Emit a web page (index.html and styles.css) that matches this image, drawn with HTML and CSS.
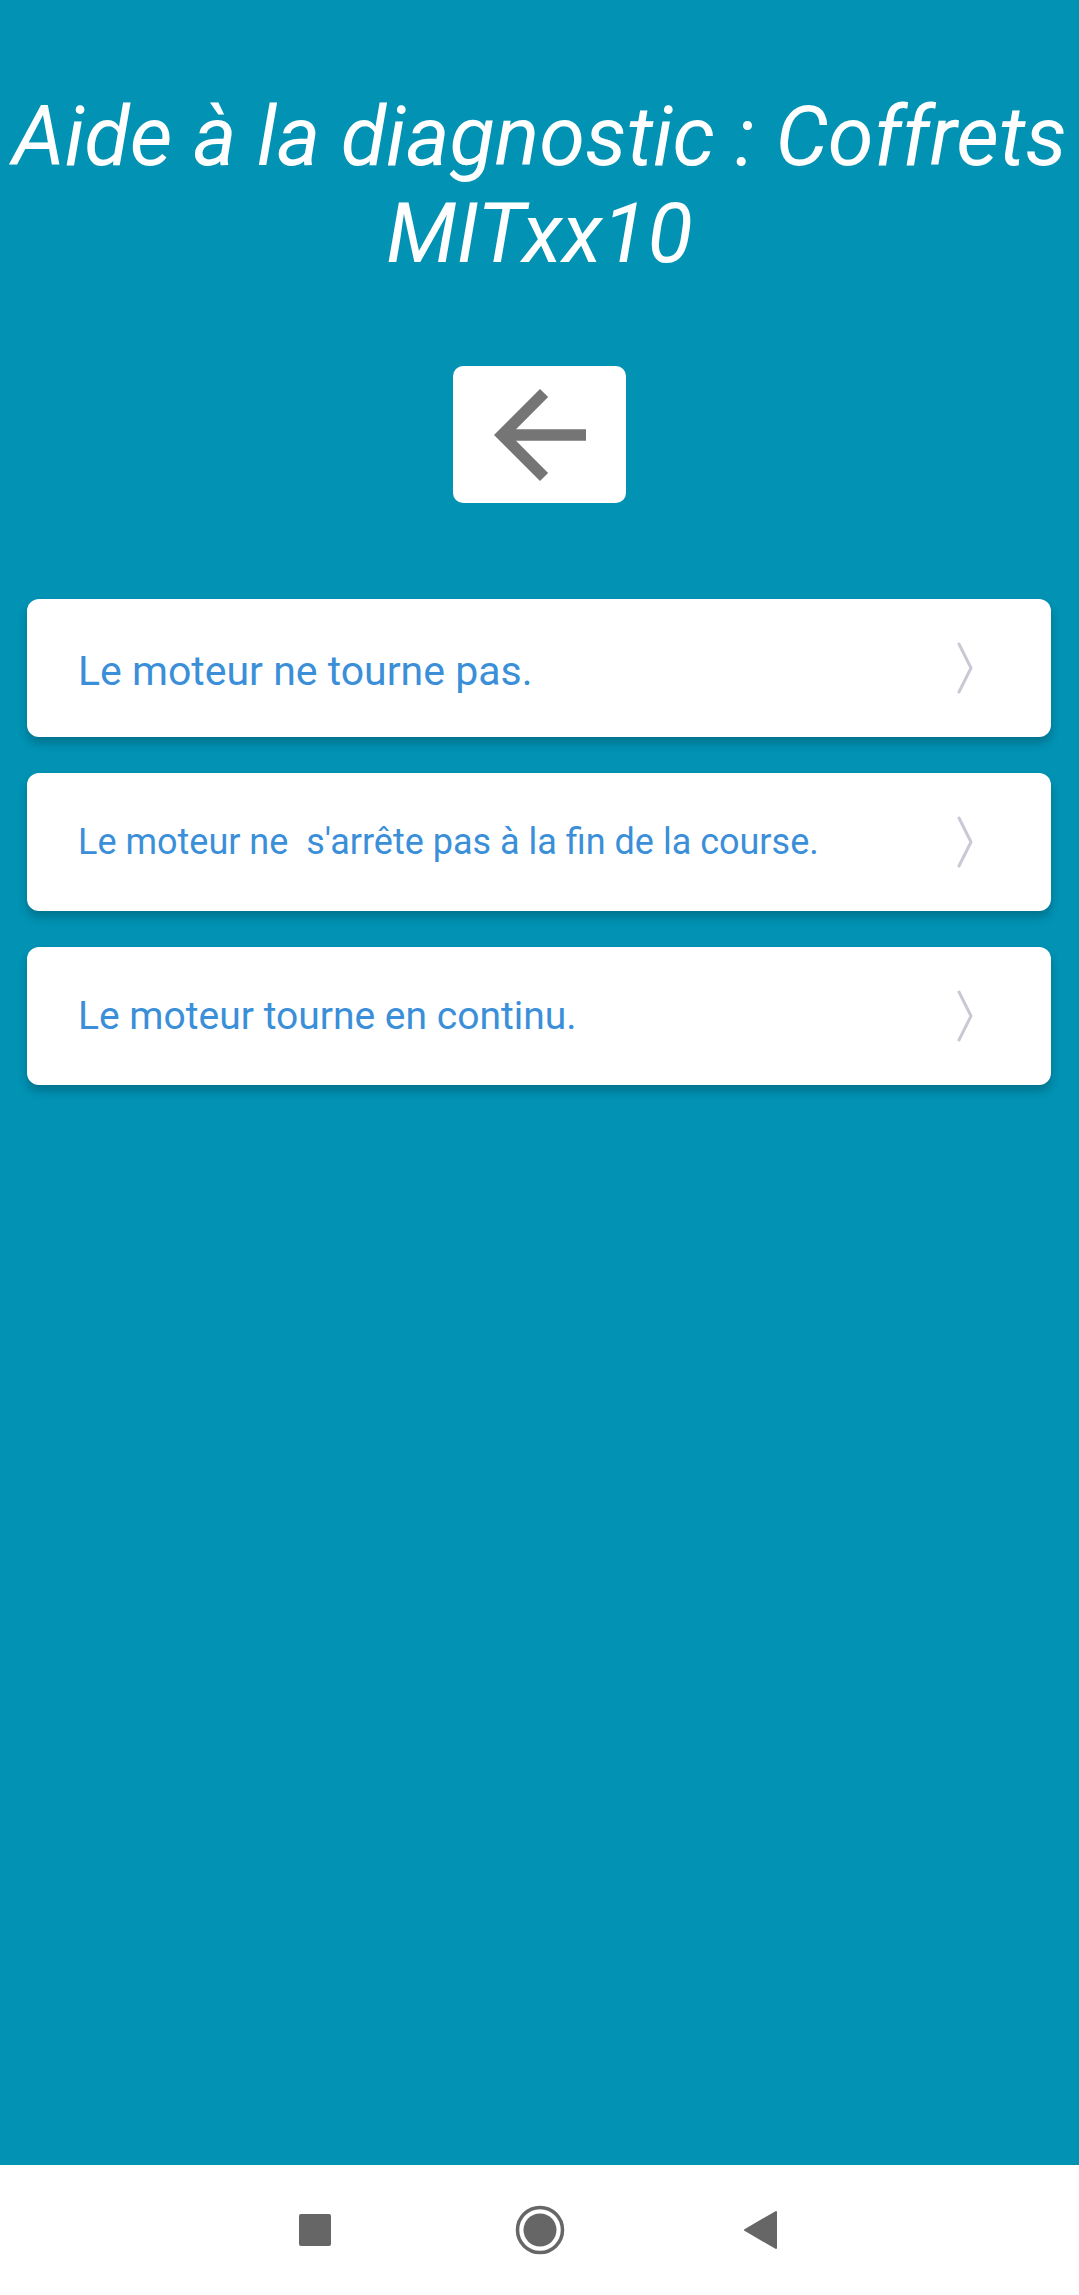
FILE: index.html
```html
<!DOCTYPE html>
<html>
  <head>
    <meta charset="UTF-8" />
    <title>Aide à la diagnostic</title>
    <link rel="stylesheet" href="styles.css">
  </head>
  <body>
    <div id="app">
      <div class="content">
        <h1 class="title">Aide à la diagnostic : Coffrets MITxx10</h1>

        <div class="back-row">
          <button class="back-btn" type="button">
            <svg class="back-icon" viewBox="4 4 16 16" width="92" height="92">
              <path d="M20 11H7.83l5.59-5.59L12 4l-8 8 8 8 1.41-1.41L7.83 13H20v-2z" fill="#757575"/>
            </svg>
          </button>
        </div>

        <div class="list">
          <div class="item">
            <span class="item-text large">Le moteur ne tourne pas.</span>
            <svg class="chevron" viewBox="0 0 16 52" width="16" height="52">
              <polyline points="2,2 14,26 2,50" fill="none" stroke="#c9c9d6" stroke-width="3" stroke-linecap="round" stroke-linejoin="round"/>
            </svg>
          </div>
          <div class="item">
            <span class="item-text small">Le moteur ne &nbsp;s'arrête pas à la fin de la course.</span>
            <svg class="chevron" viewBox="0 0 16 52" width="16" height="52">
              <polyline points="2,2 14,26 2,50" fill="none" stroke="#c9c9d6" stroke-width="3" stroke-linecap="round" stroke-linejoin="round"/>
            </svg>
          </div>
          <div class="item">
            <span class="item-text">Le moteur tourne en continu.</span>
            <svg class="chevron" viewBox="0 0 16 52" width="16" height="52">
              <polyline points="2,2 14,26 2,50" fill="none" stroke="#c9c9d6" stroke-width="3" stroke-linecap="round" stroke-linejoin="round"/>
            </svg>
          </div>
        </div>
      </div>

      <div class="navbar">
        <span class="nav-btn">
          <svg viewBox="0 0 48 48" width="48" height="48">
            <rect x="8" y="8" width="32" height="32" rx="2" fill="#666"/>
          </svg>
        </span>
        <span class="nav-btn">
          <svg viewBox="0 0 50 50" width="50" height="50">
            <circle cx="25" cy="25" r="22.5" fill="none" stroke="#666" stroke-width="3.5"/>
            <circle cx="25" cy="25" r="16.5" fill="#666"/>
          </svg>
        </span>
        <span class="nav-btn">
          <svg viewBox="0 0 48 48" width="48" height="48">
            <path d="M4 24 L35 6 V42 Z" fill="#666" stroke="#666" stroke-width="2" stroke-linejoin="round"/>
          </svg>
        </span>
      </div>
    </div>
  </body>
</html>
```

FILE: styles.css
```css
html, body {
    margin: 0;
    padding: 0;
}

body {
    font-family: Roboto, "Liberation Sans", Arial, sans-serif;
    background-color: #0192b4;
}

#app {
    height: 2295px;
    display: flex;
    flex-direction: column;
}

.content {
    flex: 1;
}

.title {
    margin: 88px 0 0;
    padding: 0;
    font-size: 83px;
    line-height: 97px;
    font-style: italic;
    font-weight: 400;
    color: #fff;
    text-align: center;
}

.back-row {
    display: flex;
    justify-content: center;
    margin-top: 84px;
}

.back-btn {
    width: 173px;
    height: 137px;
    border: none;
    border-radius: 10px;
    background-color: #fff;
    display: flex;
    align-items: center;
    justify-content: center;
    padding: 0;
    cursor: pointer;
}

.list {
    margin: 96px 28px 0 27px;
    display: flex;
    flex-direction: column;
    gap: 36px;
}

.item {
    height: 138px;
    background-color: #fff;
    border-radius: 12px;
    display: flex;
    align-items: center;
    justify-content: space-between;
    padding: 0 78px 0 51px;
    box-sizing: border-box;

    box-shadow: 0 6px 10px rgba(0, 0, 0, 0.22);
}

.item-text {
    font-size: 39px;
    color: #3a8fd8;
    white-space: pre;
}

.item-text.large {
    font-size: 41px;
    padding-top: 6px;
}

.item-text.small {
    font-size: 36px;
}

.chevron {
    display: block;
}

.navbar {
    height: 130px;
    background-color: #fff;
    display: flex;
    align-items: center;
    justify-content: center;
    gap: 175px;
}

.nav-btn {
    display: flex;
    align-items: center;
    justify-content: center;
    width: 50px;
    height: 50px;
}
```
